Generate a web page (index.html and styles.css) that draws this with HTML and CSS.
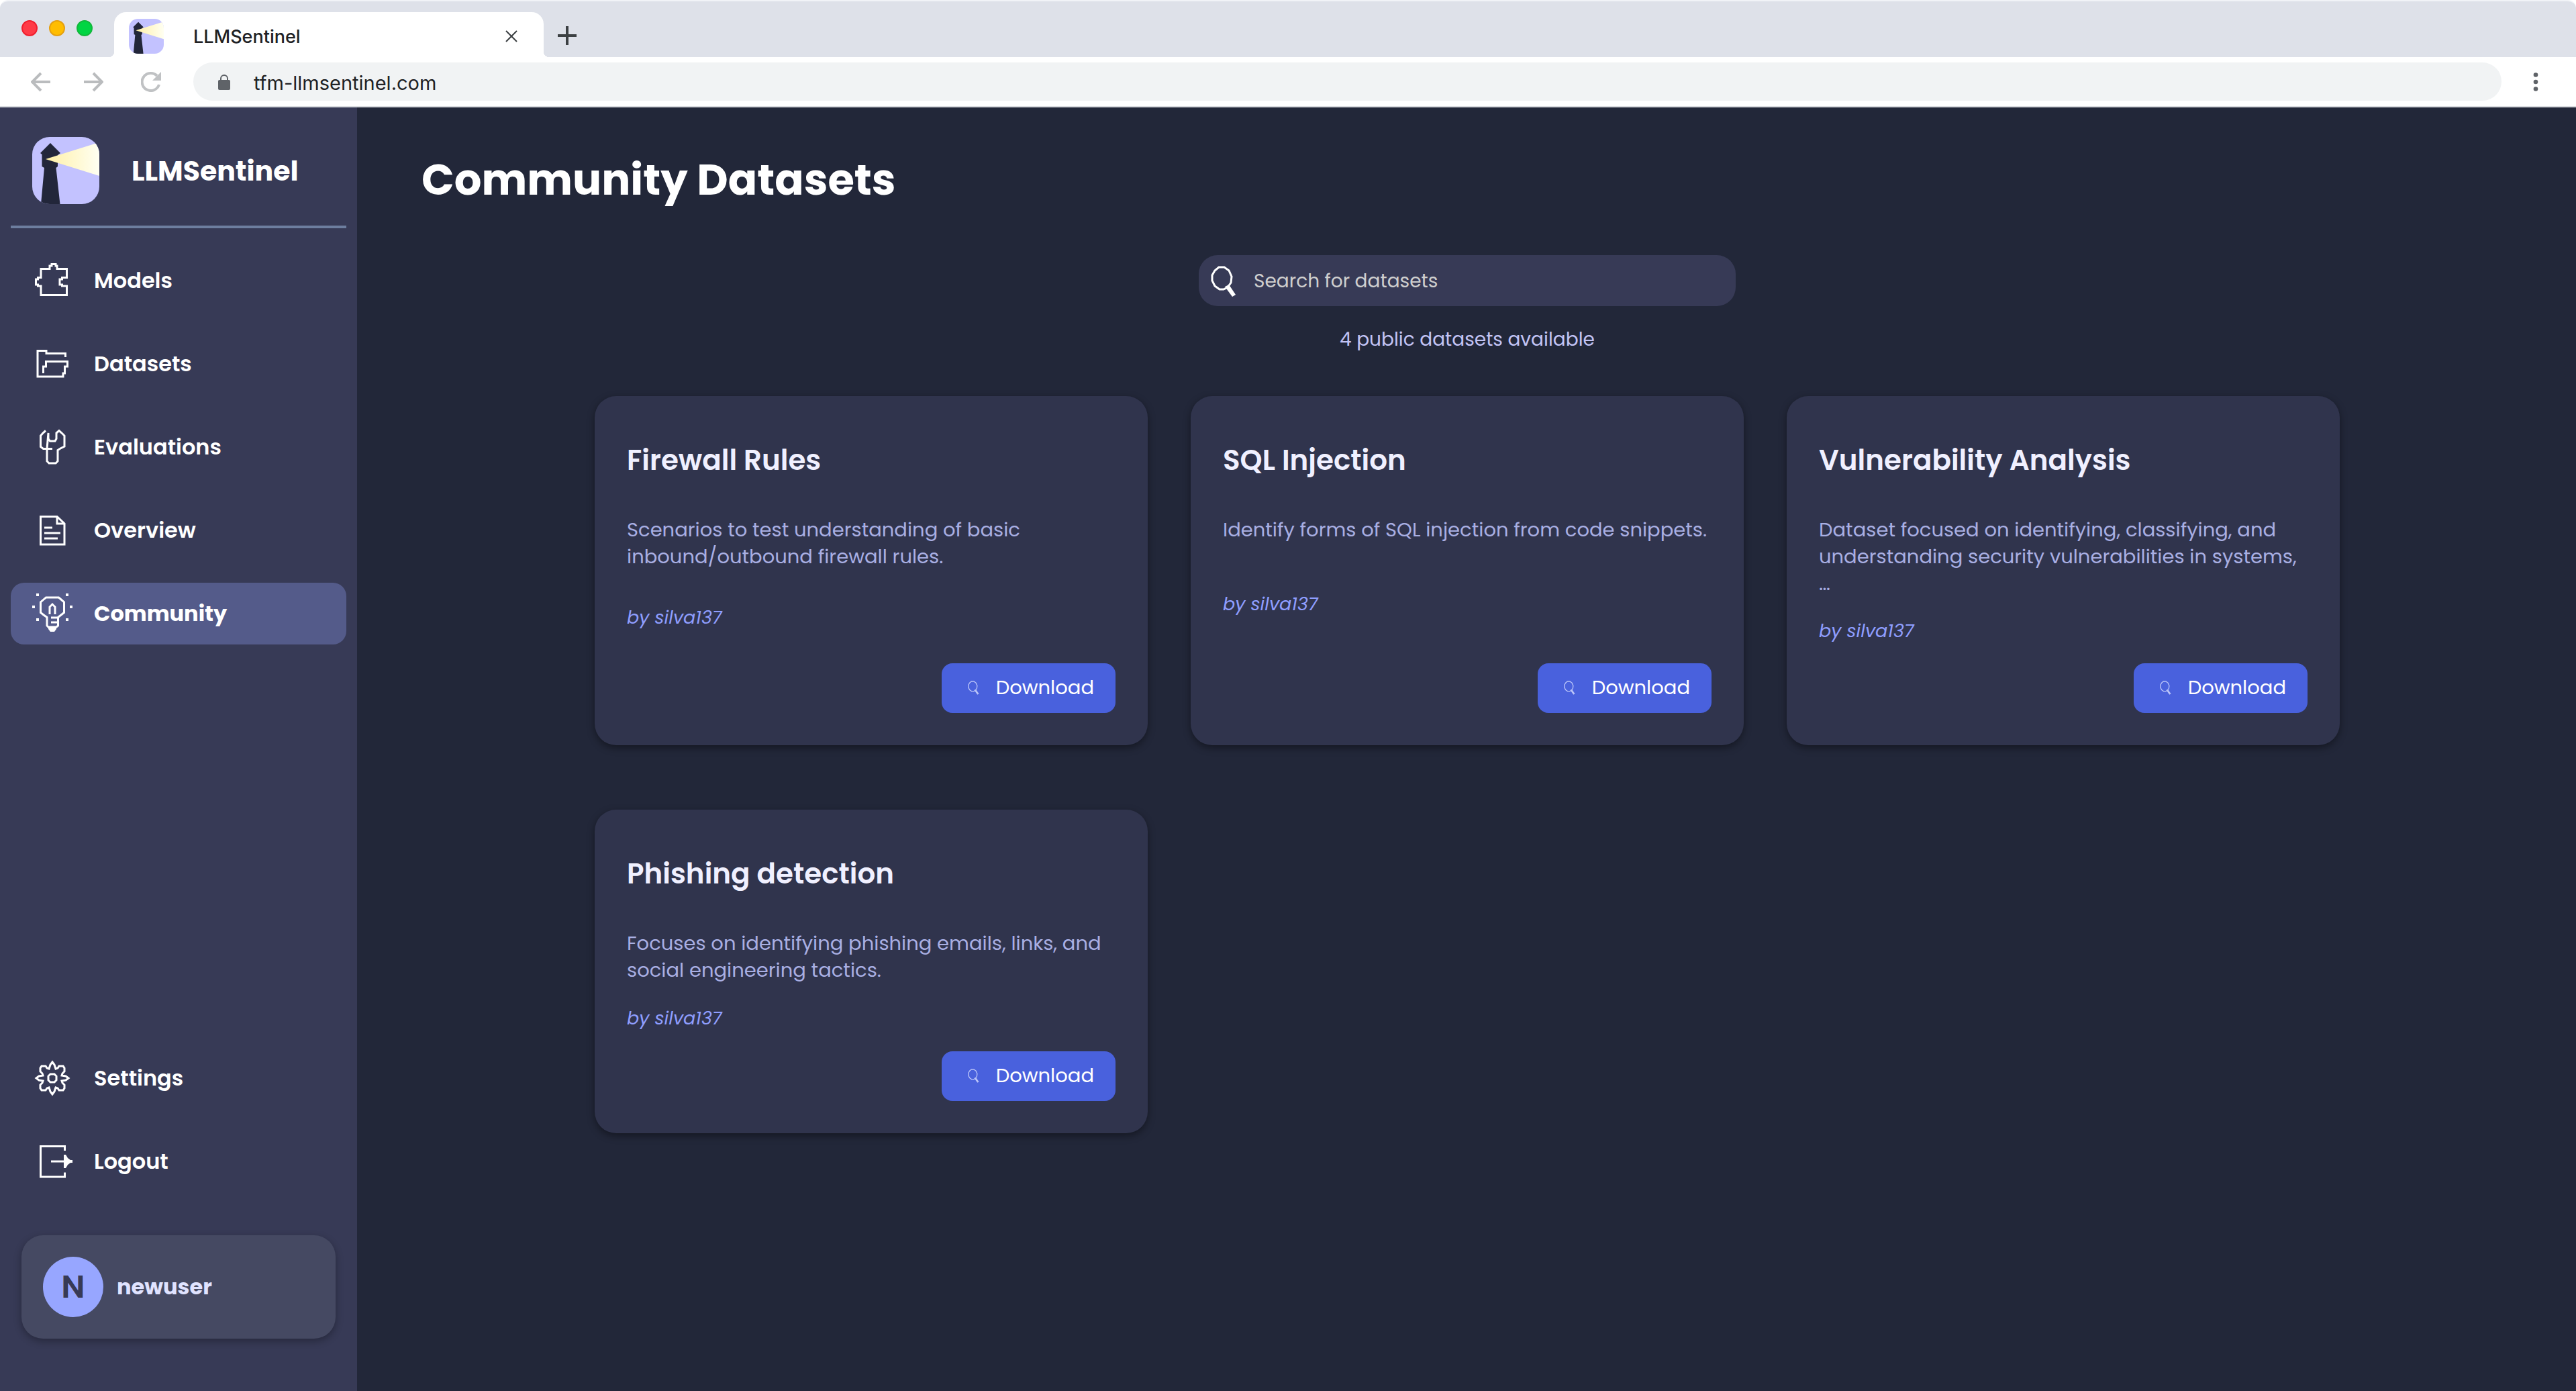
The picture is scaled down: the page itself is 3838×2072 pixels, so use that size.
FILE: index.html
```
<!DOCTYPE html>
<html lang="en">
<head>
<meta charset="utf-8">
<title>LLMSentinel</title>
<link rel="stylesheet" href="styles.css">
</head>
<body>
<svg class="sprite" aria-hidden="true">
  <defs>
    <linearGradient id="beam" x1="0" x2="1" y1="0" y2="0">
      <stop offset="0" stop-color="#fff0a6"/>
      <stop offset="1" stop-color="#fffff2"/>
    </linearGradient>
    <clipPath id="logo-clip"><rect width="100" height="100" rx="26"/></clipPath>
    <symbol id="logo" viewBox="0 0 100 100">
      <g clip-path="url(#logo-clip)">
        <rect width="100" height="100" fill="#c3c2ff"/>
        <path d="M27 9 42 24 38 27V44L35.500 46 41.500 100H13L18 46 14.500 44V26L12 24Z" fill="#22263a"/>
        <path d="M20 33 100 8V58Z" fill="url(#beam)"/>
      </g>
    </symbol>
    <symbol id="search" viewBox="0 0 40 48">
      <path d="M14 4h8l7 5 4 9-1 9-5 7-6 3h-6l-7-5-4-8v-8l4-7Z" fill="none" stroke="currentColor" stroke-width="3"/>
      <path d="m23 33 6-3 10 15-5 3Z" fill="currentColor"/>
    </symbol>
  </defs>
</svg>

<header class="browser">
  <div class="tabs">
    <div class="lights"><span class="light red"></span><span class="light amber"></span><span class="light green"></span></div>
    <div class="tab">
      <svg class="favicon" aria-hidden="true"><use href="#logo"/></svg>
      <span class="tab-title">LLMSentinel</span>
      <button class="chrome-btn tab-close" aria-label="Close tab"><svg width="20" height="20" viewBox="0 0 20 20"><path d="m2 2 16 16M18 2 2 18" fill="none" stroke="#3c4043" stroke-width="2"/></svg></button>
    </div>
    <button class="chrome-btn new-tab" aria-label="New tab"><svg width="30" height="30" viewBox="0 0 30 30"><path d="M15 1v28M1 15h28" fill="none" stroke="#3c4043" stroke-width="4"/></svg></button>
  </div>
  <div class="toolbar">
    <div class="history">
      <button class="chrome-btn" aria-label="Back"><svg width="30" height="30" viewBox="0 0 30 30"><path d="M29 15H3M15 2 2 15l13 13" fill="none" stroke="#babcbe" stroke-width="4"/></svg></button>
      <button class="chrome-btn" aria-label="Forward"><svg width="30" height="30" viewBox="0 0 30 30"><path d="M1 15h26M15 2l13 13-13 13" fill="none" stroke="#babcbe" stroke-width="4"/></svg></button>
      <button class="chrome-btn reload" aria-label="Reload"><svg width="30" height="30" viewBox="0 0 30 30"><path d="M27 19A13 13 0 1 1 24 6" fill="none" stroke="#c0c2c4" stroke-width="4"/><path d="M30 0v13H17Z" fill="#c0c2c4"/></svg></button>
    </div>
    <div class="address">
      <svg width="20" height="24" viewBox="0 0 20 24" aria-hidden="true"><path d="M5 10V7a5 5 0 0 1 10 0v3" fill="none" stroke="#5f6368" stroke-width="2"/><rect x="1" y="9" width="18" height="15" rx="2" fill="#5f6368"/></svg>
      <input class="url" type="text" value="tfm-llmsentinel.com" aria-label="Address">
    </div>
    <button class="chrome-btn menu" aria-label="Menu"><svg width="8" height="30" viewBox="0 0 8 30"><g fill="#5f6368"><circle cx="4" cy="4.500" r="3.300"/><circle cx="4" cy="15" r="3.300"/><circle cx="4" cy="25.500" r="3.300"/></g></svg></button>
  </div>
</header>

<div class="app">
  <aside class="sidebar">
    <div class="brand">
      <svg class="brand-logo" aria-hidden="true"><use href="#logo"/></svg>
      <span class="brand-name">LLMSentinel</span>
    </div>
    <nav class="nav">
      <a class="nav-item" href="#models"><svg class="nav-icon" viewBox="0 0 60 60"><path d="M13 12.500H26V8h3V5.500h6V8h2v4.500H51.500v13H44.500V28H41v8h3.500v2h7v13.500H13V38H8.500V36H5.500V28H8.500V25.500H13Z"/></svg>Models</a>
      <a class="nav-item" href="#datasets"><svg class="nav-icon" viewBox="0 0 60 60"><path d="M49.500 20V14.500H21V10.500H8V49H46V44h2.500V34h4V26.500H20.500V34H16.500V44"/></svg>Datasets</a>
      <a class="nav-item" href="#evaluations"><svg class="nav-icon" viewBox="0 0 60 60"><path d="M20 5.500 16 9l-3.500 4V29.500l4 3H30M22 32.500V51l3 3H35l3-3V34.500L42 32l6-3V13L44 9 40 5.500 36 9v8.500L34 21H26.500L24 17.500V9Z"/></svg>Evaluations</a>
      <a class="nav-item" href="#overview"><svg class="nav-icon" viewBox="0 0 60 60"><path d="M12.500 9.500H37L48 20V51H12.500ZM37 9.500V20H48M18 26H30M18 34H42M18 42H38"/></svg>Overview</a>
      <a class="nav-item active" href="#community" aria-current="page"><svg class="nav-icon" viewBox="0 0 60 60"><path d="M20.500 6H39.500L43 9l4.500 4V28.500L43 32l-4.500 3.500V48L36 50H24l-2-2V35.500L17 32l-4.500-3.500V13L17 9ZM26 31V20l4-4 4 4V31M28 36H38M28 43H38"/><path class="solid" d="M24 51H36v2l-3 4H27l-3-4ZM6 0h4v4H6ZM50 0h4v4h-4ZM0 18h4v4H0ZM56 18h4v4h-4ZM6 37h4v4H6ZM50 37h4v4h-4Z"/></svg>Community</a>
    </nav>
    <nav class="nav nav-bottom">
      <a class="nav-item" href="#settings"><svg class="nav-icon" viewBox="0 0 60 60"><path d="M30 6l3 4 2 6 3-1 2-3h6l2 3v5l-3 3-1 3 6 1 4 3-4 3-6 1 1 3 3 3v5l-2 3h-6l-2-3-3-1-2 6-3 4-3-4-2-6-3 1-2 3h-6l-2-3v-5l3-3 1-3-6-1-4-3 4-3 6-1-1-3-3-3v-5l2-3h6l2 3 3 1 2-6Z"/><path d="M27 24h6l3 3v6l-3 3H27l-3-3V27Z"/></svg>Settings</a>
      <a class="nav-item" href="#logout"><svg class="nav-icon" viewBox="0 0 60 60"><path d="M48.500 14V7.500H12.500V53H48.500V46.500M28 30H52"/><path class="solid" d="M47 20h3l3 5 4 3h3v4H57l-4 3-3 5H47Z"/></svg>Logout</a>
    </nav>
    <div class="user">
      <span class="avatar">N</span>
      <span class="user-name">newuser</span>
    </div>
  </aside>

  <main class="content">
    <h1 class="page-title">Community Datasets</h1>
    <div class="search">
      <label for="q"><svg class="search-icon" role="img" aria-label="Search"><use href="#search"/></svg></label>
      <input id="q" class="search-input" type="text" placeholder="Search for datasets">
    </div>
    <p class="count">4 public datasets available</p>
    <div class="cards">
      <article class="card">
        <div><h2 class="card-title">Firewall Rules</h2>
        <p class="desc">Scenarios to test understanding of basic inbound/outbound firewall rules.</p></div>
        <p class="author">by silva137</p>
        <button class="download"><svg class="download-icon" aria-hidden="true"><use href="#search"/></svg>Download</button>
      </article>
      <article class="card">
        <div><h2 class="card-title">SQL Injection</h2>
        <p class="desc">Identify forms of SQL injection from code snippets.</p></div>
        <p class="author">by silva137</p>
        <button class="download"><svg class="download-icon" aria-hidden="true"><use href="#search"/></svg>Download</button>
      </article>
      <article class="card">
        <div><h2 class="card-title">Vulnerability Analysis</h2>
        <p class="desc">Dataset focused on identifying, classifying, and understanding security vulnerabilities in systems, <br>…</p></div>
        <p class="author">by silva137</p>
        <button class="download"><svg class="download-icon" aria-hidden="true"><use href="#search"/></svg>Download</button>
      </article>
      <article class="card">
        <div><h2 class="card-title">Phishing detection</h2>
        <p class="desc">Focuses on identifying phishing emails, links, and social engineering tactics.</p></div>
        <p class="author">by silva137</p>
        <button class="download"><svg class="download-icon" aria-hidden="true"><use href="#search"/></svg>Download</button>
      </article>
    </div>
  </main>
</div>
</body>
</html>
```
FILE: styles.css
```
* { box-sizing: border-box; }

body {
  margin: 0;
  min-height: 100vh;
  display: flex;
  flex-direction: column;
  background: #222739;
  font-family: Poppins, Inter, "Open Sans", sans-serif;
  color: #fff;
}

h1, h2, p { margin: 0; }
button, input { font-family: inherit; border: 0; }
svg { display: block; }
.sprite { position: absolute; width: 0; height: 0; }

/* Browser frame */
.browser {
  background: #fff;
  border-bottom: 2px solid #dadce0;
  font-family: Inter, sans-serif;
  color: #202124;
}
.tabs {
  display: flex;
  align-items: flex-start;
  height: 85px;
  padding: 16px 32px 0;
  background: #dee1e9;
  border-top: 2px solid #f1f3f7;
  border-radius: 12px 12px 0 0;
}
.lights { display: flex; gap: 17px; margin-right: 32px; padding-top: 12px; }
.light { width: 24px; height: 24px; border-radius: 50%; border: 2px solid; }
.red { background: #ff3b47; border-color: #f0202f; }
.amber { background: #ffbd00; border-color: #e5a010; }
.green { background: #00d543; border-color: #12b83c; }
.tab {
  position: relative;
  display: flex;
  align-items: center;
  width: 640px;
  height: 67px;
  padding: 4px 38px 0 22px;
  background: #fff;
  border-radius: 18px 18px 0 0;
}
.tab::before, .tab::after {
  content: "";
  position: absolute;
  bottom: 0;
  width: 8px;
  height: 8px;
}
.tab::before { left: -8px; background: radial-gradient(circle at 0 0, transparent 8px, #fff 8px); }
.tab::after { right: -8px; background: radial-gradient(circle at 100% 0, transparent 8px, #fff 8px); }
.favicon { width: 52px; height: 52px; }
.tab-title { margin-left: 44px; padding-top: 2px; font-size: 27px; font-weight: 500; line-height: 36px; }
.chrome-btn { display: flex; align-items: center; justify-content: center; padding: 0; background: none; }
.tab-close { margin-left: auto; width: 20px; height: 20px; }
.new-tab { width: 30px; height: 30px; margin: 20px; }
.toolbar {
  display: flex;
  align-items: center;
  padding: 8px 45px 8px 46px;
}
.history { display: flex; gap: 48px; }
.reload { margin-left: 8px; }
.address {
  flex: 1;
  display: flex;
  align-items: center;
  gap: 34px;
  height: 57px;
  margin: 0 36px 0 48px;
  padding: 0 36px;
  background: #f1f3f4;
  border-radius: 29px;
}
.url { flex: 1; padding: 3px 0 0; background: none; font-size: 29px; color: #202124; }
.menu { width: 30px; height: 30px; }

/* Layout */
.app { flex: 1; display: flex; }
.sidebar {
  flex: none;
  display: flex;
  flex-direction: column;
  width: 532px;
  padding: 44px 16px 78px;
  background: #373a56;
}
.brand {
  display: flex;
  align-items: center;
  gap: 48px;
  padding: 0 32px 32px;
  border-bottom: 4px solid #6d7e9f;
}
.brand-logo { width: 100px; height: 100px; }
.brand-name { padding-top: 2px; font-size: 41px; font-weight: 700; line-height: 64px; }
.nav { display: flex; flex-direction: column; gap: 32px; margin-top: 32px; }
.nav-bottom { margin-top: auto; }
.nav-item {
  display: flex;
  align-items: center;
  gap: 32px;
  height: 92px;
  padding: 0 32px;
  border-radius: 20px;
  color: #fff;
  font-size: 32px;
  font-weight: 600;
  line-height: 48px;
  text-decoration: none;
}
.active { background: #545b8a; font-weight: 700; }
.nav-icon { width: 60px; height: 60px; fill: none; stroke: currentColor; stroke-width: 3; }
.nav-icon .solid { fill: currentColor; stroke: none; }
.user {
  display: flex;
  align-items: center;
  gap: 20px;
  margin: 64px 16px 0;
  padding: 32px;
  background: #454962;
  border-radius: 32px;
  box-shadow: 0 4px 12px rgba(0, 0, 0, .3);
}
.avatar {
  width: 90px;
  height: 90px;
  border-radius: 50%;
  background: #97a6ff;
  color: #373a56;
  font-size: 48px;
  font-weight: 600;
  line-height: 90px;
  text-align: center;
}
.user-name { color: #e0e3ff; font-size: 32px; font-weight: 700; line-height: 48px; }

/* Community page */
.content { flex: 1; padding: 60px 94px 60px 96px; }
.page-title { font-size: 64px; font-weight: 700; line-height: 96px; }
.search {
  display: flex;
  align-items: center;
  gap: 26px;
  max-width: 800px;
  height: 76px;
  margin: 64px auto 28px;
  padding: 0 16px;
  background: #373a56;
  border-radius: 28px;
}
.search-icon { width: 40px; height: 48px; }
.search-input { flex: 1; padding: 2px 0 0; background: none; color: #fff; font-size: 28px; }
.search-input::placeholder { color: #cfcfcf; opacity: 1; }
.count { color: #c3c4f5; font-size: 28px; line-height: 44px; text-align: center; }
.cards {
  display: grid;
  grid-template-columns: repeat(3, 1fr);
  align-items: stretch;
  gap: 96px 64px;
  max-width: 2600px;
  margin: 62px auto 0;
}
.card {
  display: flex;
  flex-direction: column;
  justify-content: space-between;
  min-height: 482px;
  padding: 48px;
  background: #30344d;
  border-radius: 32px;
  box-shadow: 0 4px 12px rgba(0, 0, 0, .4);
}
.card-title { padding-top: 16px; color: #f0f0ff; font-size: 42px; font-weight: 600; line-height: 64px; }
.desc { margin-top: 51px; color: #a9afe3; font-size: 29px; line-height: 40px; }
.author { margin: 31px 0 28px; color: #8f9eff; font-size: 27px; font-style: italic; line-height: 40px; }
.download {
  align-self: flex-end;
  display: flex;
  align-items: center;
  gap: 25px;
  height: 74px;
  padding: 0 32px 2px 38px;
  background: #4961dd;
  border-radius: 16px;
  color: #fff;
  font-size: 29px;
  line-height: 44px;
}
.download-icon { width: 18px; height: 22px; color: #b9c3f8; }
```
